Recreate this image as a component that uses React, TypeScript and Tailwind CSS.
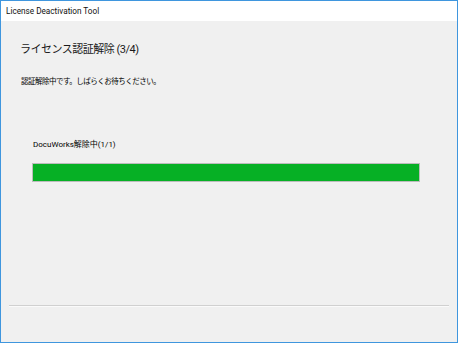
const font = {
  fontFamily: 'Roboto, "Noto Sans CJK JP", sans-serif',
}

function ProgressBar({ value }: { value: number }) {
  return (
    <div className="h-[19px] w-[388px] border border-[#bcbcbc] bg-[#e6e6e6]">
      <div className="h-full bg-[#06b025]" style={{ width: `${value}%` }} />
    </div>
  )
}

export default function App() {
  return (
    <div
      className="flex h-[343px] w-[458px] flex-col border border-[#3f96de] bg-[#f0f0f0] text-black"
      style={font}
    >
      <div className="flex h-[20px] shrink-0 items-center bg-white pl-[5px] text-[8.2px] leading-none text-[#111]">
        License Deactivation Tool
      </div>
      <div className="flex flex-1 flex-col">
        <h1 className="mt-[21px] pl-[19px] text-[11px] leading-[16px] tracking-[-0.5px] text-[#1a1a1a]">
          ライセンス認証解除 (3/4)
        </h1>
        <p className="mt-[18px] pl-[20px] text-[7.5px] leading-[12px] tracking-[-0.5px]">
          認証解除中です。しばらくお待ちください。
        </p>
        <div className="mt-[51px] pl-[31px]">
          <p className="pl-[1px] text-[8px] leading-[12px]">DocuWorks解除中(1/1)</p>
          <div className="mt-[12px]">
            <ProgressBar value={100} />
          </div>
        </div>
        <div className="mx-[8px] mt-auto mb-[35px] h-[2px] border-t border-[#d0d0d0] bg-[#fafafa]" />
      </div>
    </div>
  )
}
